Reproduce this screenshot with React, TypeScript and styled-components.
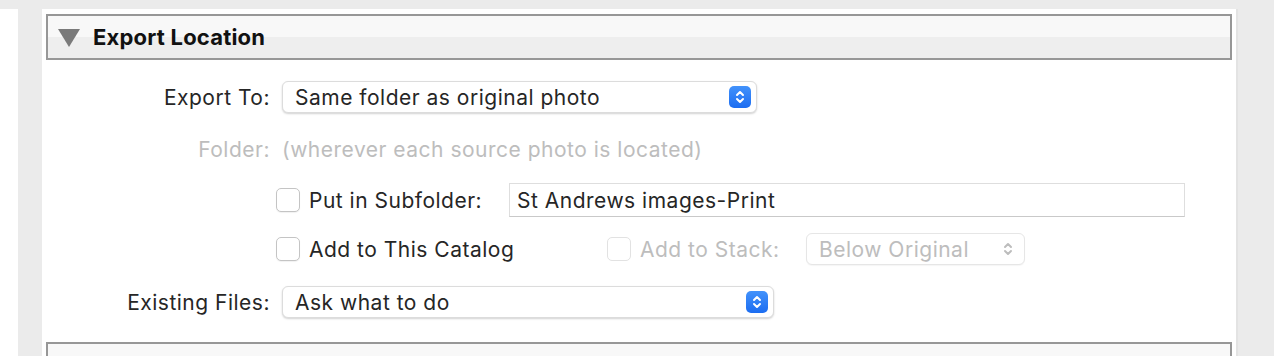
import React from 'react';
import styled, {createGlobalStyle} from 'styled-components';

const GlobalStyle = createGlobalStyle`
    html, body {
        margin: 0;
        padding: 0;
        background: #ebebeb;
        font-family: Inter, "Noto Sans", "Liberation Sans", sans-serif;
        -webkit-font-smoothing: antialiased;
    }
`

const Page = styled.div`
    display: flex;
    height: 356px;
    padding-top: 9px;
    box-sizing: border-box;
    overflow: hidden;
`

const SideStrip = styled.div`
    width: 18px;
    background: #fff;
    flex-shrink: 0;
`

const Panel = styled.div`
    margin-left: 24px;
    width: 1194px;
    background: #fff;
    border-right: 2px solid #e3e3e3;
    display: flex;
    flex-direction: column;
`

const Section = styled.div<{ $top: number }>`
    padding: ${({$top}) => $top}px 4px 0;
`

const Header = styled.div<{ $flat?: boolean }>`
    height: 42px;
    border: 2px solid #979797;
    background: ${({$flat}) => $flat ? '#f8f8f8' : 'linear-gradient(#f8f8f8 50%, #eeeeee 50%)'};
    display: flex;
    align-items: center;
    padding-left: 10px;
    gap: 13px;
`

const Triangle = styled.span`
    width: 0;
    height: 0;
    border-left: 11px solid transparent;
    border-right: 11px solid transparent;
    border-top: 18px solid #7a7a7a;
    margin-top: 2px;
`

const Title = styled.span`
    font-size: 22px;
    font-weight: 700;
    letter-spacing: 0.2px;
    color: #111;
`

const Form = styled.div`
    display: flex;
    flex-direction: column;
`

const Row = styled.div<{ $mt: number; $h: number; $indent?: number }>`
    display: flex;
    align-items: center;
    margin-top: ${({$mt}) => $mt}px;
    height: ${({$h}) => $h}px;
    padding-left: ${({$indent}) => $indent ?? 0}px;
`

const Label = styled.span<{ $muted?: boolean }>`
    width: 224px;
    margin-right: 12px;
    text-align: right;
    font-size: 21px;
    letter-spacing: 0.5px;
    color: ${({$muted}) => $muted ? '#bdbdbd' : '#262626'};
    white-space: nowrap;
`

const Text = styled.span<{ $muted?: boolean }>`
    font-size: 21px;
    letter-spacing: 0.5px;
    color: ${({$muted}) => $muted ? '#bdbdbd' : '#262626'};
    white-space: nowrap;
`

const CheckGroup = styled.label<{ $w: number }>`
    display: flex;
    align-items: center;
    gap: 9px;
    width: ${({$w}) => $w}px;
    flex-shrink: 0;
`

const Box = styled.span<{ $disabled?: boolean }>`
    width: 22px;
    height: 22px;
    border-radius: 5px;
    border: 1px solid ${({$disabled}) => $disabled ? '#e2e2e2' : '#c4c4c4'};
    background: #fff;
    box-shadow: ${({$disabled}) => $disabled ? 'none' : '0 1px 1px rgba(0,0,0,0.06)'};
`

const Select = styled.div<{ $w: number; $disabled?: boolean }>`
    width: ${({$w}) => $w}px;
    height: 32px;
    box-sizing: border-box;
    border-radius: 6px;
    border: 1px solid ${({$disabled}) => $disabled ? '#e6e6e6' : '#dcdcdc'};
    box-shadow: ${({$disabled}) => $disabled ? '0 1px 1px rgba(0,0,0,0.04)' : '0 1px 2px rgba(0,0,0,0.18)'};
    background: #fff;
    display: flex;
    align-items: center;
    justify-content: space-between;
    padding: 0 5px 0 12px;
    font-size: 21px;
    letter-spacing: 0.5px;
    color: ${({$disabled}) => $disabled ? '#bdbdbd' : '#262626'};
`

const Stepper = styled.span`
    width: 22px;
    height: 22px;
    border-radius: 5px;
    background: linear-gradient(#4292fb, #1c6df1);
    display: flex;
    align-items: center;
    justify-content: center;
`

const PlainStepper = styled.span`
    width: 22px;
    display: flex;
    align-items: center;
    justify-content: center;
`

const TextField = styled.div`
    width: 676px;
    height: 34px;
    box-sizing: border-box;
    border: 1px solid #dedede;
    border-bottom-color: #c9c9c9;
    background: #fff;
    display: flex;
    align-items: center;
    padding-left: 7px;
    font-size: 21px;
    letter-spacing: 0.5px;
    color: #262626;
`

const Divider = styled.div`
    height: 2px;
    background: #979797;
    margin-top: 20px;
`

const Chevrons: React.FC<{ color: string }> = ({color}) => (
    <svg width="10" height="16" viewBox="0 0 10 16" fill="none" stroke={color} strokeWidth="2"
         strokeLinecap="round" strokeLinejoin="round">
        <path d="M2 6 L5 3 L8 6"/>
        <path d="M2 10 L5 13 L8 10"/>
    </svg>
)

const App: React.FC = () => {
    return (
        <>
            <GlobalStyle/>
            <Page>
                <SideStrip/>
                <Panel>
                    <Section $top={5}>
                        <Header>
                            <Triangle/>
                            <Title>Export Location</Title>
                        </Header>
                    </Section>
                    <Form>
                        <Row $mt={21} $h={32} $indent={4}>
                            <Label>Export To:</Label>
                            <Select $w={475}>
                                <span>Same folder as original photo</span>
                                <Stepper><Chevrons color="#fff"/></Stepper>
                            </Select>
                        </Row>
                        <Row $mt={20} $h={32} $indent={4}>
                            <Label $muted>Folder:</Label>
                            <Text $muted>(wherever each source photo is located)</Text>
                        </Row>
                        <Row $mt={18} $h={34} $indent={234}>
                            <CheckGroup $w={233}>
                                <Box/>
                                <Text>Put in Subfolder:</Text>
                            </CheckGroup>
                            <TextField>St Andrews images-Print</TextField>
                        </Row>
                        <Row $mt={15} $h={34} $indent={234}>
                            <CheckGroup $w={331}>
                                <Box/>
                                <Text>Add to This Catalog</Text>
                            </CheckGroup>
                            <CheckGroup $w={199}>
                                <Box $disabled/>
                                <Text $muted>Add to Stack:</Text>
                            </CheckGroup>
                            <Select $w={219} $disabled>
                                <span>Below Original</span>
                                <PlainStepper><Chevrons color="#bdbdbd"/></PlainStepper>
                            </Select>
                        </Row>
                        <Row $mt={20} $h={32} $indent={4}>
                            <Label>Existing Files:</Label>
                            <Select $w={492}>
                                <span>Ask what to do</span>
                                <Stepper><Chevrons color="#fff"/></Stepper>
                            </Select>
                        </Row>
                    </Form>
                    <Divider/>
                    <Section $top={4}>
                        <Header $flat/>
                    </Section>
                </Panel>
            </Page>
        </>
    );
};

export default App;
